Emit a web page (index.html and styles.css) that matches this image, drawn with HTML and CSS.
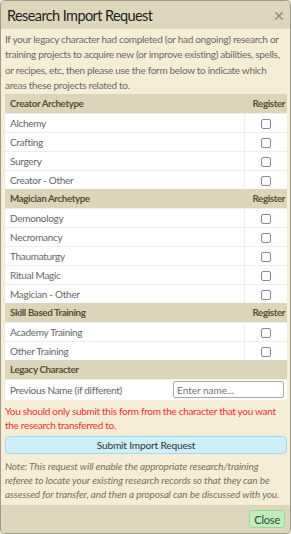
FILE: index.html
```html
<!DOCTYPE html>
<html>
<head>
    <title>Research Import Request</title>
    <link rel="stylesheet" href="styles.css">
</head>
<body>
    <div class="dialog">
        <div class="dialog-title">
            <span>Research Import Request</span>
            <span class="close-x">&#x2715;</span>
        </div>
        <div class="dialog-body">
            <p class="intro">If your legacy character had completed (or had ongoing) research or training projects to acquire new (or improve existing) abilities, spells, or recipes, etc, then please use the form below to indicate which areas these projects related to.</p>

            <table class="research">
                <tr class="group">
                    <th>Creator Archetype</th>
                    <th class="reg">Register</th>
                </tr>
                <tr><td>Alchemy</td><td class="reg"><input type="checkbox"></td></tr>
                <tr><td>Crafting</td><td class="reg"><input type="checkbox"></td></tr>
                <tr><td>Surgery</td><td class="reg"><input type="checkbox"></td></tr>
                <tr><td>Creator - Other</td><td class="reg"><input type="checkbox"></td></tr>
                <tr class="group">
                    <th>Magician Archetype</th>
                    <th class="reg">Register</th>
                </tr>
                <tr><td>Demonology</td><td class="reg"><input type="checkbox"></td></tr>
                <tr><td>Necromancy</td><td class="reg"><input type="checkbox"></td></tr>
                <tr><td>Thaumaturgy</td><td class="reg"><input type="checkbox"></td></tr>
                <tr><td>Ritual Magic</td><td class="reg"><input type="checkbox"></td></tr>
                <tr><td>Magician - Other</td><td class="reg"><input type="checkbox"></td></tr>
                <tr class="group">
                    <th>Skill Based Training</th>
                    <th class="reg">Register</th>
                </tr>
                <tr><td>Academy Training</td><td class="reg"><input type="checkbox"></td></tr>
                <tr><td>Other Training</td><td class="reg"><input type="checkbox"></td></tr>
                <tr class="group">
                    <th colspan="2">Legacy Character</th>
                </tr>
                <tr class="name-row">
                    <td colspan="2">
                        <div class="name-line">
                            <span>Previous Name (if different)</span>
                            <input type="text" class="name-input" placeholder="Enter name...">
                        </div>
                    </td>
                </tr>
            </table>

            <p class="warning">You should only submit this form from the character that you want the research transferred to.</p>
            <button class="btn-submit">Submit Import Request</button>
            <p class="note">Note: This request will enable the appropriate research/training referee to locate your existing research records so that they can be assessed for transfer, and then a proposal can be discussed with you.</p>
        </div>
        <div class="dialog-footer">
            <button class="btn-close">Close</button>
        </div>
    </div>
</body>
</html>
```

FILE: styles.css
```css
body {
    margin: 0;
    background: #e8e2d0;
    font-family: Lato, "Noto Sans", sans-serif;
}

.dialog {
    width: 289px;
    height: 532px;
    display: flex;
    flex-direction: column;
    border: 1px solid #a09a8a;
    border-radius: 5px;
    overflow: hidden;
    background: #f5edd6;
}

.dialog-title {
    height: 28px;
    background: #ddd6bd;
    display: flex;
    align-items: center;
    justify-content: space-between;
    padding: 0 6px 0 6px;
    font-size: 14.5px;
    letter-spacing: -0.6px;
    color: #1e1e1e;
    flex-shrink: 0;
}

.close-x {
    font-size: 14px;
    color: #8a8a8a;
}

.dialog-body {
    flex: 1;
    padding: 3px 3px 0 4px;
    font-size: 10px;
    letter-spacing: -0.3px;
}

.intro {
    margin: 0;
    color: #6a6a6a;
    line-height: 15.4px;
}

.research {
    width: 100%;
    border-collapse: collapse;
    color: #666;
}

.research th {
    background: #ddd5bb;
    color: #5a5035;
    text-align: left;
    font-weight: bold;
    font-size: 9.8px;
    letter-spacing: -0.4px;
    height: 19px;
    padding: 0 5px;
}

.research td {
    background: #fff;
    height: 18px;
    padding: 0 5px;
    border-top: 1px solid #eee;
}

.research .reg {
    width: 32px;
    text-align: center;
    border-left: 1px solid #eee;
}

.research th.reg {
    border-left: none;
    text-align: right;
    padding-right: 2px;
}

.research input[type="checkbox"] {
    appearance: none;
    box-sizing: border-box;
    width: 10px;
    height: 10px;
    margin: 0;
    border: 1px solid #8c8c8c;
    border-radius: 2px;
    background: #fff;
    vertical-align: middle;
}

.name-row td {
    height: 20px;
}

.name-line {
    display: flex;
    align-items: center;
    justify-content: space-between;
}

.name-input {
    box-sizing: border-box;
    width: 111px;
    height: 17px;
    border: 1px solid #a8a8a8;
    border-radius: 2px;
    font-family: inherit;
    font-size: 10px;
    padding: 0 3px;
    margin-right: -2px;
}

.warning {
    margin: 4px 0 3px 0;
    color: #f03030;
    line-height: 14.5px;
}

.btn-submit {
    display: block;
    width: 100%;
    height: 18px;
    background: #cdeefb;
    border: 1px solid #a6daf0;
    border-radius: 4px;
    font-family: inherit;
    font-size: 10.2px;
    letter-spacing: -0.2px;
    color: #333;
    padding: 0;
}

.note {
    margin: 5px 0 0 0;
    color: #7a7060;
    font-style: italic;
    letter-spacing: -0.12px;
    line-height: 14.2px;
}

.dialog-footer {
    height: 28px;
    background: #ddd6bd;
    display: flex;
    align-items: center;
    justify-content: flex-end;
    padding-right: 5px;
    flex-shrink: 0;
}

.btn-close {
    height: 18px;
    background: #c2ebbe;
    border: 1px solid #9cd69a;
    border-radius: 3px;
    font-family: inherit;
    font-size: 11px;
    letter-spacing: -0.2px;
    color: #2d4a2d;
    padding: 0 4px;
}
```
